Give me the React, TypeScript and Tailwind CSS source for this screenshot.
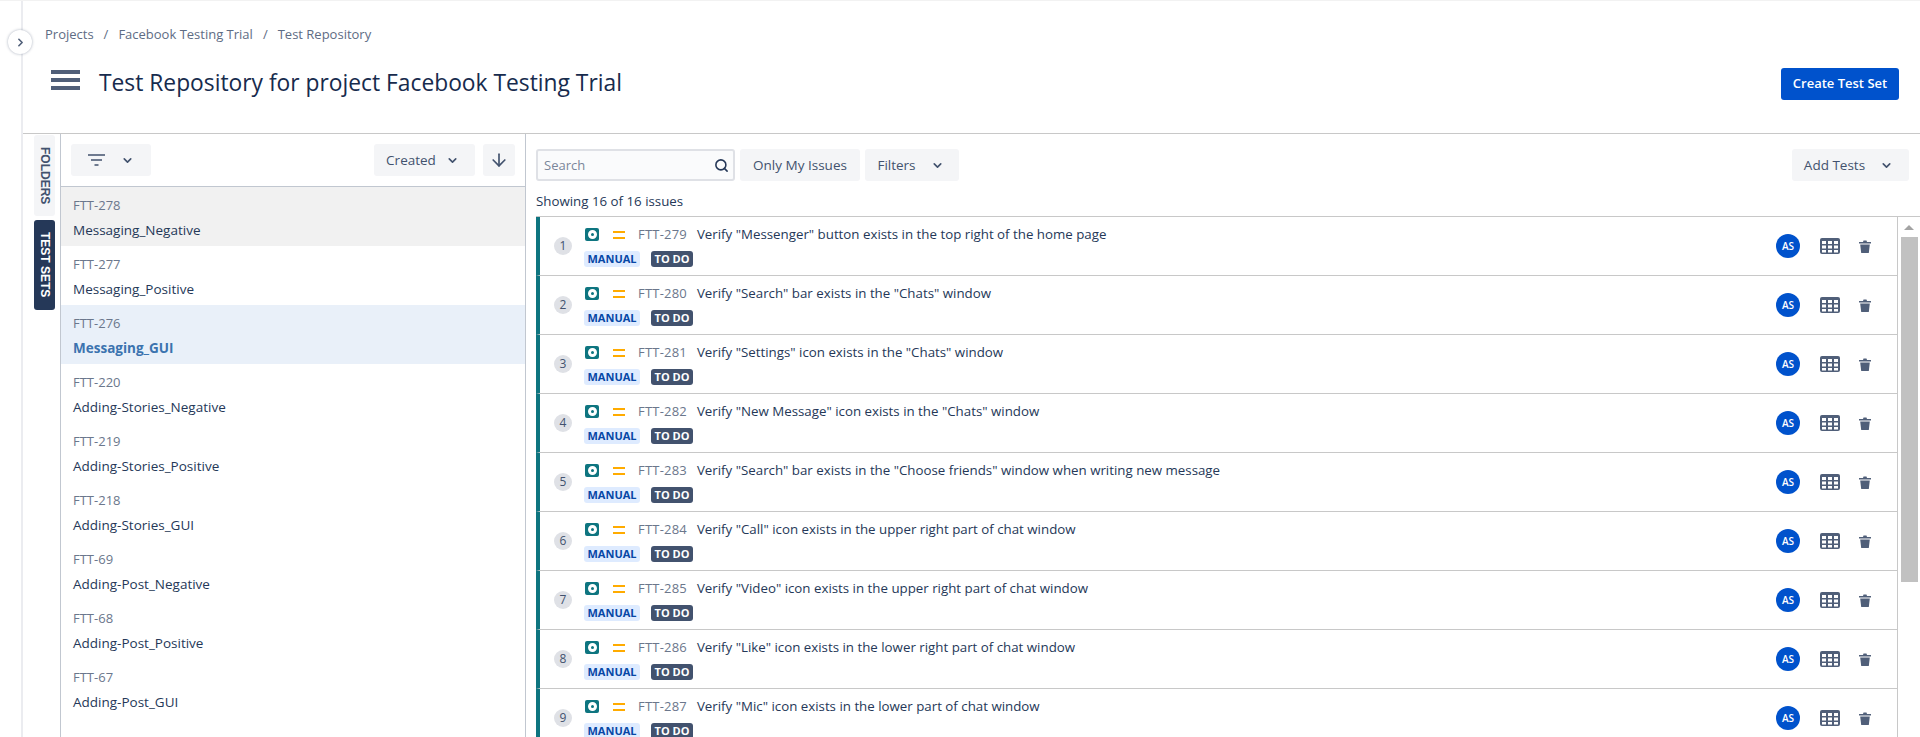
import { ChevronDown, ChevronRight, ArrowDown, Search } from 'lucide-react';

interface TestSet {
    readonly id: string;
    readonly name: string;
}

const testSets: TestSet[] = [
    { id: 'FTT-278', name: 'Messaging_Negative' },
    { id: 'FTT-277', name: 'Messaging_Positive' },
    { id: 'FTT-276', name: 'Messaging_GUI' },
    { id: 'FTT-220', name: 'Adding-Stories_Negative' },
    { id: 'FTT-219', name: 'Adding-Stories_Positive' },
    { id: 'FTT-218', name: 'Adding-Stories_GUI' },
    { id: 'FTT-69', name: 'Adding-Post_Negative' },
    { id: 'FTT-68', name: 'Adding-Post_Positive' },
    { id: 'FTT-67', name: 'Adding-Post_GUI' },
];

const issues: TestSet[] = [
    { id: 'FTT-279', name: 'Verify "Messenger" button exists in the top right of the home page' },
    { id: 'FTT-280', name: 'Verify "Search" bar exists in the "Chats" window' },
    { id: 'FTT-281', name: 'Verify "Settings" icon exists in the "Chats" window' },
    { id: 'FTT-282', name: 'Verify "New Message" icon exists in the "Chats" window' },
    { id: 'FTT-283', name: 'Verify "Search" bar exists in the "Choose friends" window when writing new message' },
    { id: 'FTT-284', name: 'Verify "Call" icon exists in the upper right part of chat window' },
    { id: 'FTT-285', name: 'Verify "Video" icon exists in the upper right part of chat window' },
    { id: 'FTT-286', name: 'Verify "Like" icon exists in the lower right part of chat window' },
    { id: 'FTT-287', name: 'Verify "Mic" icon exists in the lower part of chat window' },
];

const TableIcon = () => (
    <svg width="20" height="16" viewBox="0 0 20 16" className="shrink-0">
        <rect width="20" height="16" rx="2" fill="#505f79" />
        <g fill="#fff">
            <rect x="2" y="3" width="4" height="3" />
            <rect x="8" y="3" width="4" height="3" />
            <rect x="14" y="3" width="4" height="3" />
            <rect x="2" y="7.500" width="4" height="3" />
            <rect x="8" y="7.500" width="4" height="3" />
            <rect x="14" y="7.500" width="4" height="3" />
            <rect x="2" y="12" width="4" height="2.500" />
            <rect x="8" y="12" width="4" height="2.500" />
            <rect x="14" y="12" width="4" height="2.500" />
        </g>
    </svg>
);

const TrashIcon = () => (
    <svg width="12" height="13" viewBox="0 0 12 13" className="shrink-0">
        <path d="M0 2h4l.5-1.500h3L8 2h4v1.400H0z M1.200 4.400h9.600l-1 8.600H2.200z" fill="#505f79" />
    </svg>
);

const IssueRow = ({ issue, index }: { issue: TestSet; index: number }) => (
    <div className="h-[59px] shrink-0 flex border-b border-[#c8c8c8] border-l-4 border-l-[#0e7580] box-border">
        <div className="w-[44px] shrink-0 flex items-center pl-[14px]">
            <span className="w-[18px] h-[18px] rounded-full bg-[#dfe1e6] text-[12px] text-[#42526e] flex items-center justify-center">{index + 1}</span>
        </div>
        <div className="flex-1 flex flex-col pt-[11px] min-w-0">
            <div className="flex items-center h-[13px]">
                <span className="w-[14px] h-[13px] ml-px rounded-[2px] bg-[#0e7580] flex items-center justify-center">
                    <span className="w-[9px] h-[9px] rounded-full border-[3px] border-white" />
                </span>
                <span className="ml-[14px] w-[12px] h-[8px] border-y-2 border-[#ffab00]" />
                <span className="ml-[13px] text-[#6b778c] text-[13px] tracking-[0.2px]">{issue.id}</span>
                <span className="ml-[10px] text-[#253858] text-[13.300px]">{issue.name}</span>
            </div>
            <div className="flex mt-[10px] gap-[11px]">
                <span className="h-[16px] w-[56px] rounded-[3px] bg-[#deebff] text-[#0747a6] text-[11px] font-bold flex items-center justify-center">MANUAL</span>
                <span className="h-[16px] w-[42px] rounded-[3px] bg-[#42526e] text-white text-[11px] font-bold flex items-center justify-center">TO DO</span>
            </div>
        </div>
        <div className="flex items-center shrink-0 pr-[26px]">
            <span className="w-6 h-6 rounded-full bg-[#0052cc] text-white text-[10px] font-semibold flex items-center justify-center">AS</span>
            <span className="ml-[20px]"><TableIcon /></span>
            <span className="ml-[19px]"><TrashIcon /></span>
        </div>
    </div>
);

export default function App() {
    return (
        <div className="h-[737px] w-[1920px] overflow-hidden bg-white flex flex-col border-t border-[#f2f2f2] relative font-['Open_Sans','Noto_Sans',sans-serif] text-[13px]">
            <button className="absolute left-[8px] top-[29px] w-6 h-6 rounded-full bg-white shadow-[0_0_3px_rgba(9,30,66,0.35)] flex items-center justify-center text-[#505f79] z-10">
                <ChevronRight size={13} strokeWidth={3} />
            </button>
            <div className="flex-1 flex min-h-0 ml-[21px] border-l-2 border-[#ebecf0]">
                <div className="flex-1 flex flex-col min-w-0">
                    <nav className="h-[67px] shrink-0 flex items-center gap-[10px] pl-[22px] text-[#5e6c84] text-[13px]">
                        <span>Projects</span>
                        <span>/</span>
                        <span>Facebook Testing Trial</span>
                        <span>/</span>
                        <span>Test Repository</span>
                    </nav>
                    <header className="h-[65px] shrink-0 flex items-start pl-[28px] pr-[21px]">
                        <div className="w-[29px] h-[20px] mt-[2px] flex flex-col justify-between">
                            <span className="h-[4px] bg-[#505f79]" />
                            <span className="h-[4px] bg-[#505f79]" />
                            <span className="h-[4px] bg-[#505f79]" />
                        </div>
                        <h1 className="ml-[19px] mt-[2px] text-[#172b4d] text-[22.800px] font-medium leading-[26px]">Test Repository for project Facebook Testing Trial</h1>
                        <button className="ml-auto w-[118px] h-[32px] rounded-[3px] bg-[#0052cc] text-white text-[13px] font-semibold">Create Test Set</button>
                    </header>
                    <div className="flex-1 flex min-h-0 border-t border-[#c8c8c8]">
                        <div className="w-[37px] shrink-0 pl-[11px] pt-[1px] flex flex-col gap-[4px] font-['Liberation_Sans',sans-serif] text-[12px] font-bold">
                            <span className="w-[21px] h-[81px] rounded-[3px] bg-[#f4f5f7] text-[#42526e] flex items-center justify-center [writing-mode:vertical-rl]">FOLDERS</span>
                            <span className="w-[21px] h-[90px] rounded-[3px] bg-[#253858] text-white flex items-center justify-center [writing-mode:vertical-rl]">TEST SETS</span>
                        </div>
                        <aside className="w-[466px] shrink-0 flex flex-col border-x border-[#c1c7d0]">
                            <div className="h-[53px] shrink-0 flex items-center px-[10px] gap-[8px] border-b border-[#c1c7d0]">
                                <button className="w-[80px] h-[32px] rounded-[3px] bg-[#f4f5f7] flex items-center justify-center gap-[16px] text-[#42526e]">
                                    <svg width="17" height="13" viewBox="0 0 17 13"><path d="M0 1h17M3 6h11M6.500 11h4" stroke="#42526e" strokeWidth="1.600" /></svg>
                                    <ChevronDown size={13} strokeWidth={3} />
                                </button>
                                <button className="ml-auto w-[101px] h-[32px] pr-[4px] rounded-[3px] bg-[#f4f5f7] flex items-center justify-center gap-[10px] text-[#42526e] text-[13.500px]">
                                    Created
                                    <ChevronDown size={13} strokeWidth={3} />
                                </button>
                                <button className="w-[32px] h-[32px] rounded-[3px] bg-[#f4f5f7] flex items-center justify-center text-[#42526e]">
                                    <ArrowDown size={20} strokeWidth={2} />
                                </button>
                            </div>
                            {testSets.map((set, i) => (
                                <div
                                    key={set.id}
                                    className={`h-[59px] shrink-0 pl-[12px] pt-[9px] ${i === 0 ? 'bg-[#f1f1f1]' : i === 2 ? 'bg-[#e9f0f9]' : 'bg-white'}`}
                                >
                                    <div className="text-[#6b778c] leading-[18px]">{set.id}</div>
                                    <div className={`mt-[7px] leading-[18px] text-[13.500px] ${i === 2 ? 'font-bold text-[#3b73af]' : 'text-[#253858]'}`}>{set.name}</div>
                                </div>
                            ))}
                        </aside>
                        <main className="flex-1 flex flex-col min-w-0 pl-[10px]">
                            <div className="h-[47px] shrink-0 flex items-end gap-[5px] pr-[11px] text-[#42526e] text-[13.500px]">
                                <label className="w-[199px] h-[32px] rounded-[3px] border-2 border-[#dfe1e6] bg-[#fafbfc] flex items-center pl-[6px] pr-[4px] text-[#7a869a] text-[13px]">
                                    <span className="flex-1 pt-[2px]">Search</span>
                                    <Search size={15} strokeWidth={2.500} className="text-[#253858]" />
                                </label>
                                <button className="w-[120px] h-[32px] rounded-[3px] bg-[#f4f5f7]">Only My Issues</button>
                                <button className="w-[94px] h-[32px] pr-[3px] rounded-[3px] bg-[#f4f5f7] flex items-center justify-center gap-[15px]">
                                    Filters
                                    <ChevronDown size={13} strokeWidth={3} />
                                </button>
                                <button className="ml-auto w-[117px] h-[32px] pr-[4px] rounded-[3px] bg-[#f4f5f7] flex items-center justify-center gap-[15px]">
                                    Add Tests
                                    <ChevronDown size={13} strokeWidth={3} />
                                </button>
                            </div>
                            <div className="h-[35px] shrink-0 flex items-center pt-[6px] text-[#253858] text-[13.300px]">Showing 16 of 16 issues</div>
                            <div className="flex-1 flex min-h-0 border-t border-[#c8c8c8]">
                                <div className="flex-1 flex flex-col min-w-0 overflow-hidden border-r border-[#c8c8c8]">
                                    {issues.map((issue, i) => (
                                        <IssueRow key={issue.id} issue={issue} index={i} />
                                    ))}
                                </div>
                                <div className="w-[22px] shrink-0 flex flex-col items-center pt-[8px]">
                                    <span className="w-0 h-0 border-x-[5px] border-x-transparent border-b-[5px] border-b-[#a3a3a3]" />
                                    <span className="mt-[7px] w-[17px] h-[345px] bg-[#c1c1c1]" />
                                </div>
                            </div>
                        </main>
                    </div>
                </div>
            </div>
        </div>
    );
}
